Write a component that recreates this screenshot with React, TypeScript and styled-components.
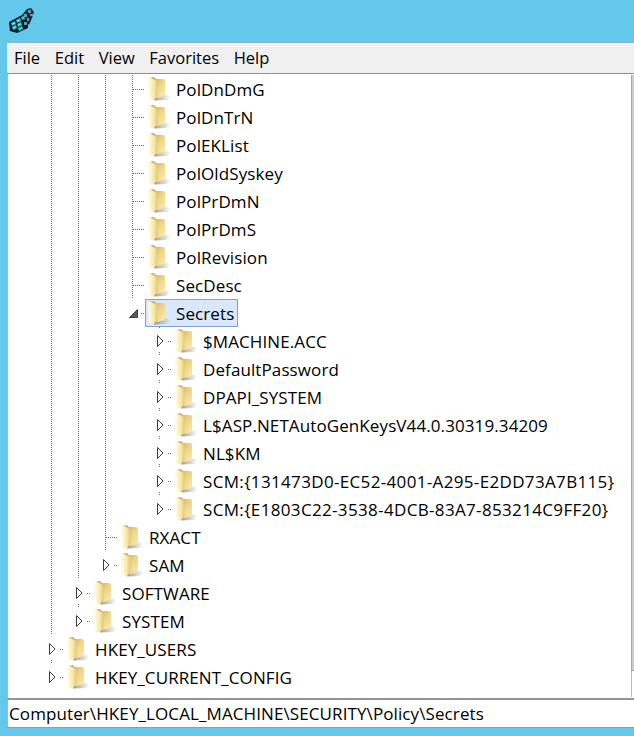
import React from "react";
import styled, { createGlobalStyle } from "styled-components";

const dots = (color: string) =>
  `repeating-linear-gradient(to bottom, ${color} 0 1px, transparent 1px 2px)`;
const hdots = (color: string) =>
  `repeating-linear-gradient(to right, ${color} 0 1px, transparent 1px 2px)`;

const GlobalStyle = createGlobalStyle`
  html, body {
    margin: 0;
    padding: 0;
    background: #63c8ea;
  }
`;

const Page = styled.div`
  width: 634px;
  height: 736px;
  display: flex;
  flex-direction: column;
  overflow: hidden;
  background: #63c8ea;
  font-family: "Open Sans", "Liberation Sans", sans-serif;
  font-size: 17px;
  letter-spacing: 0.1px;
  color: #000;
`;

const TitleBar = styled.div`
  height: 42px;
  flex: none;
  display: flex;
  align-items: flex-start;
  padding: 8px 0 0 9px;
  box-sizing: border-box;
`;

const Window = styled.div`
  height: 684px;
  flex: none;
  margin-left: 7px;
  display: flex;
  flex-direction: column;
  border-top: 1px solid #86b4c8;
  border-bottom: 1px solid #9a9aa0;
`;

const MenuBar = styled.div`
  height: 30px;
  flex: none;
  display: flex;
  align-items: center;
  padding-left: 7px;
  gap: 14.6px;
  background: #f0f0f0;
  border-bottom: 1px solid #8f8f96;
`;

const MenuItem = styled.span`
  font-size: 16.5px;
  letter-spacing: 0;
  line-height: 30px;
`;

const Body = styled.div`
  flex: 1;
  min-height: 0;
  display: flex;
  border-left: 1px solid #b4b4b8;
  border-bottom: 2px solid #93939a;
  background: #fff;
`;

const Tree = styled.div`
  flex: 1;
  padding: 1px 0 0 38px;
`;

const Scrollbar = styled.div`
  flex: none;
  width: 3px;
  margin-top: 1px;
  display: flex;
  flex-direction: column;
  margin-bottom: 1px;
  border-left: 1px solid #bdbdbd;
  box-sizing: border-box;
`;

const ScrollThumb = styled.div`
  height: 595px;
  margin-left: -1px;
  background: #cdcdcd;
  border-left: 1px solid #a6a6a6;
  border-bottom: 1px solid #a6a6a6;
`;

const Row = styled.div`
  display: flex;
  height: 28px;
`;

const Guide = styled.div<{ $line: boolean }>`
  flex: none;
  width: 27px;
  height: 28px;
  background: ${(p) => (p.$line ? dots("#6e6e6e") : "none")} 5px 0 / 1px 100% no-repeat;
`;

const Branch = styled.div`
  flex: none;
  width: 18px;
  height: 28px;
  background:
    ${dots("#6e6e6e")} 5px 0 / 1px 100% no-repeat,
    ${hdots("#6e6e6e")} 6px 14px / 12px 1px no-repeat;
`;

const Toggle = styled.div<{ $first?: boolean; $hasNext?: boolean }>`
  flex: none;
  width: 18px;
  height: 28px;
  display: flex;
  align-items: center;
  background:
    ${(p) => (p.$first ? dots("#6e6e6e") : "none")} 5px 0 / 1px 2px no-repeat,
    ${(p) => (p.$hasNext ? dots("#6e6e6e") : "none")} 5px 25px / 1px 3px no-repeat,
    ${hdots("#6e6e6e")} 14px 14px / 4px 1px no-repeat;
`;

const Node = styled.div<{ $selected?: boolean }>`
  display: flex;
  align-items: center;
  height: 28px;
  box-sizing: border-box;
  padding: 0 3px 0 2px;
  white-space: nowrap;
  border: 1px solid ${(p) => (p.$selected ? "#7da2ce" : "transparent")};
  background: ${(p) => (p.$selected ? "#d9e8fb" : "transparent")};
`;

const Label = styled.span<{ $guid?: boolean }>`
  margin-left: 5px;
  letter-spacing: ${(p) => (p.$guid ? "0.34px" : "inherit")};
`;

const StatusBar = styled.div`
  height: 27px;
  flex: none;
  display: flex;
  align-items: center;
  padding-left: 1px;
  background: #fff;
  border-left: 1px solid #b4b4b8;
`;

function RegistryIcon() {
  return (
    <svg width="25" height="25" viewBox="0 0 25 25">
      <path d="M0 14 L13 7 L19 10 L19 20 L8 25 L1 23 Z" fill="#07192b" />
      <path d="M13 7 L18 1 L22 0 L25 4 L23 10 L20 17 L16 11 Z" fill="#1a2c3e" />
      <g fill="#2fcfcb">
        <path d="M2 15 L6 13 L7 16 L3 18 Z" />
        <path d="M7 12 L11 10 L12 13 L8 15 Z" />
        <path d="M12 9 L15 8 L16 11 L13 12 Z" />
        <path d="M3 19 L7 17 L8 20 L4 22 Z" />
        <path d="M8 16 L12 14 L13 17 L9 19 Z" />
        <path d="M9 20 L13 18 L14 21 L10 23 Z" />
      </g>
      <g fill="#a4f0ea">
        <rect x="4" y="15" width="1" height="1" />
        <rect x="9" y="12" width="1" height="1" />
        <rect x="5" y="19" width="1" height="1" />
        <rect x="10" y="16" width="1" height="1" />
      </g>
      <g fill="#6f9aac">
        <rect x="15" y="14" width="3" height="3" />
        <rect x="15" y="6" width="3" height="3" />
        <rect x="19" y="2" width="3" height="3" />
        <rect x="21" y="6" width="3" height="2" />
        <rect x="18" y="10" width="2" height="3" />
      </g>
    </svg>
  );
}

function Folder() {
  return (
    <svg width="23" height="24" viewBox="0 0 23 24" style={{ flex: "none" }}>
      <defs>
        <linearGradient id="fold-front" x1="0" x2="1" y1="0" y2="0">
          <stop offset="0" stopColor="#fffbe2" />
          <stop offset="0.6" stopColor="#f9eaa8" />
          <stop offset="1" stopColor="#e6c672" />
        </linearGradient>
        <linearGradient id="fold-back" x1="0" x2="1" y1="0" y2="1">
          <stop offset="0" stopColor="#c0994a" />
          <stop offset="0.55" stopColor="#eed68a" />
          <stop offset="1" stopColor="#f8ecb4" />
        </linearGradient>
        <linearGradient id="fold-shadow" x1="0" x2="1" y1="0" y2="0">
          <stop offset="0" stopColor="#777" stopOpacity="0.75" />
          <stop offset="1" stopColor="#888" stopOpacity="0" />
        </linearGradient>
      </defs>
      <path d="M8 15 L23 19 L19 23 L6 23.5 Z" fill="url(#fold-shadow)" />
      <path d="M1 1 L6 0 L8 2 L15 2 L17 3 L17 19 L9 21 Z" fill="url(#fold-back)" />
      <path d="M0 1 L3 1 L9 4 L9.5 20 L4 23.5 L1 22 Z" fill="url(#fold-front)" />
      <path d="M0 1 L2 1 L3 22.5 L1 22 Z" fill="#fff9de" />
    </svg>
  );
}

function Expander({ open }: { open?: boolean }) {
  return (
    <svg width="14" height="14" viewBox="0 0 14 14" style={{ flex: "none" }}>
      {open ? (
        <path d="M10.5 3.5 V11.5 H2.5 Z" fill="#595959" stroke="#3f3f3f" strokeWidth="1" />
      ) : (
        <path d="M3.5 1.5 L9 7 L3.5 12.5 Z" fill="#fff" stroke="#3c3c3c" strokeWidth="1" />
      )}
    </svg>
  );
}

type NodeRow = {
  label: string;
  guides: boolean[];
  toggle?: "closed" | "open";
  first?: boolean;
  hasNext?: boolean;
  selected?: boolean;
};

const pol = [true, true, true];
const secret = [true, true, true, false];

const rows: NodeRow[] = [
  { label: "PolDnDmG", guides: pol },
  { label: "PolDnTrN", guides: pol },
  { label: "PolEKList", guides: pol },
  { label: "PolOldSyskey", guides: pol },
  { label: "PolPrDmN", guides: pol },
  { label: "PolPrDmS", guides: pol },
  { label: "PolRevision", guides: pol },
  { label: "SecDesc", guides: pol },
  { label: "Secrets", guides: pol, toggle: "open", selected: true },
  { label: "$MACHINE.ACC", guides: secret, toggle: "closed", first: true, hasNext: true },
  { label: "DefaultPassword", guides: secret, toggle: "closed", hasNext: true },
  { label: "DPAPI_SYSTEM", guides: secret, toggle: "closed", hasNext: true },
  { label: "L$ASP.NETAutoGenKeysV44.0.30319.34209", guides: secret, toggle: "closed", hasNext: true },
  { label: "NL$KM", guides: secret, toggle: "closed", hasNext: true },
  { label: "SCM:{131473D0-EC52-4001-A295-E2DD73A7B115}", guides: secret, toggle: "closed", hasNext: true },
  { label: "SCM:{E1803C22-3538-4DCB-83A7-853214C9FF20}", guides: secret, toggle: "closed" },
  { label: "RXACT", guides: [true, true] },
  { label: "SAM", guides: [true, true], toggle: "closed" },
  { label: "SOFTWARE", guides: [true], toggle: "closed", hasNext: true },
  { label: "SYSTEM", guides: [true], toggle: "closed" },
  { label: "HKEY_USERS", guides: [], toggle: "closed", hasNext: true },
  { label: "HKEY_CURRENT_CONFIG", guides: [], toggle: "closed" },
];

const menus = ["File", "Edit", "View", "Favorites", "Help"];

export default function App() {
  return (
    <Page>
      <GlobalStyle />
      <TitleBar>
        <RegistryIcon />
      </TitleBar>
      <Window>
        <MenuBar>
          {menus.map((m) => (
            <MenuItem key={m}>{m}</MenuItem>
          ))}
        </MenuBar>
        <Body>
          <Tree>
            {rows.map((r) => (
              <Row key={r.label}>
                {r.guides.map((on, i) => (
                  <Guide key={i} $line={on} />
                ))}
                {r.toggle ? (
                  <Toggle $first={r.first} $hasNext={r.hasNext}>
                    <Expander open={r.toggle === "open"} />
                  </Toggle>
                ) : (
                  <Branch />
                )}
                <Node $selected={r.selected}>
                  <Folder />
                  <Label $guid={r.label.startsWith("SCM")}>{r.label}</Label>
                </Node>
              </Row>
            ))}
          </Tree>
          <Scrollbar>
            <ScrollThumb />
          </Scrollbar>
        </Body>
        <StatusBar>Computer\HKEY_LOCAL_MACHINE\SECURITY\Policy\Secrets</StatusBar>
      </Window>
    </Page>
  );
}
